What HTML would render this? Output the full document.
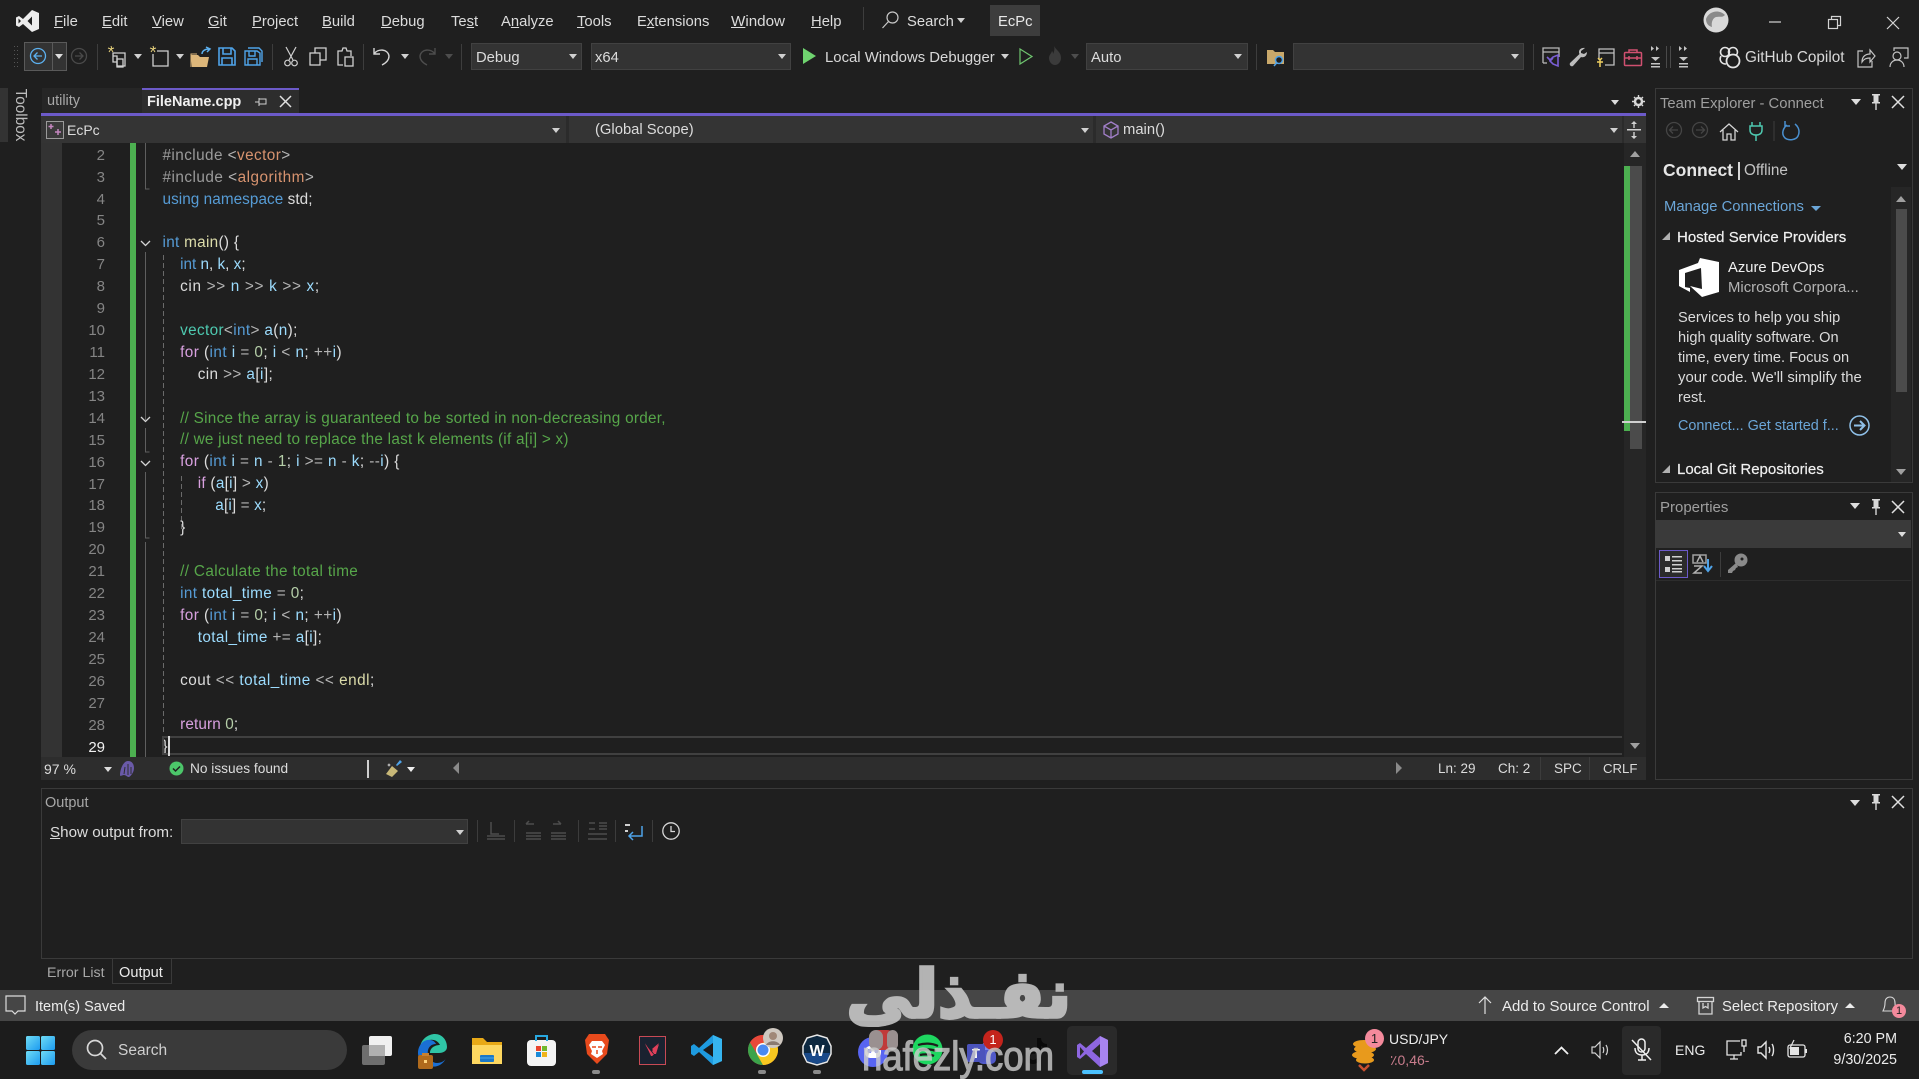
<!DOCTYPE html>
<html lang="en"><head><meta charset="utf-8"><title>EcPc - Visual Studio</title>
<style>
html,body{margin:0;padding:0;background:#1f1f1f;}
#r{position:relative;width:1919px;height:1079px;overflow:hidden;background:#1f1f1f;font-family:"Liberation Sans",sans-serif;font-size:15px;color:#dcdcdc;}
.t{position:absolute;white-space:pre;line-height:20px;margin-top:-9px;}
.b{position:absolute;}
svg{position:absolute;overflow:visible;}
.sep{position:absolute;width:1px;background:#3d3d3d;}
.tri{position:absolute;width:0;height:0;border-left:4px solid transparent;border-right:4px solid transparent;border-top:5px solid #d0d0d0;}
#code{position:absolute;left:162.5px;top:144.7px;font-size:15.3px;line-height:21.92px;color:#dcdcdc;}
#code div{height:21.92px;white-space:pre;}
.i1{padding-left:17.6px}.i2{padding-left:35.2px}.i3{padding-left:52.8px}
#nums{position:absolute;left:60px;width:45px;top:144.7px;text-align:right;font-size:15px;line-height:21.92px;color:#858585;}
.k{color:#569cd6}.c{color:#d8a0df}.v{color:#9cdcfe}.y{color:#4ec9b0}.f{color:#dcdcaa}.s{color:#d7936f}.g{color:#57a64a}.p{color:#9b9b9b}.n{color:#b5cea8}.o{color:#b4b4b4}
</style></head><body><div id="r">

<!-- VS logo -->
<svg style="left:15px;top:9px" width="25" height="24" viewBox="0 0 25 24"><path d="M17 1l7 3v16l-7 3-9-8-4 3-3-1.500V8.500L4 7l4 3zM17 7.500L12.500 12 17 16.500zM3.500 9.500v5L6 12z" fill="#ececec" fill-rule="evenodd"/></svg>

<!-- menu -->
<div style="font-size:14.8px;color:#dcdcdc">
<div class="t" style="left:54px;top:21px"><u>F</u>ile</div>
<div class="t" style="left:102px;top:21px"><u>E</u>dit</div>
<div class="t" style="left:152px;top:21px"><u>V</u>iew</div>
<div class="t" style="left:208px;top:21px"><u>G</u>it</div>
<div class="t" style="left:252px;top:21px"><u>P</u>roject</div>
<div class="t" style="left:322px;top:21px"><u>B</u>uild</div>
<div class="t" style="left:381px;top:21px"><u>D</u>ebug</div>
<div class="t" style="left:451px;top:21px">Te<u>s</u>t</div>
<div class="t" style="left:501px;top:21px">A<u>n</u>alyze</div>
<div class="t" style="left:577px;top:21px"><u>T</u>ools</div>
<div class="t" style="left:637px;top:21px">E<u>x</u>tensions</div>
<div class="t" style="left:731px;top:21px;font-size:15.2px"><u>W</u>indow</div>
<div class="t" style="left:811px;top:21px"><u>H</u>elp</div>
<div class="t" style="left:907px;top:21px">Search</div>
</div>
<div class="sep" style="left:863px;top:7px;height:23px"></div>
<svg style="left:881px;top:10px" width="20" height="20" fill="none" stroke="#c8c8c8" stroke-width="1.200"><circle cx="11.500" cy="7.500" r="5.500"/><path d="M7.500 11.500L1.500 18"/></svg>
<div class="tri" style="left:957px;top:18px"></div>
<div class="b" style="left:990px;top:5px;width:50px;height:31px;background:#3d3d3d"></div>
<div class="t" style="left:998px;top:21px;font-size:14.8px;color:#e8e8e8">EcPc</div>

<!-- top right -->
<svg style="left:1702px;top:7px" width="28" height="26"><ellipse cx="14" cy="13" rx="12.500" ry="12.500" fill="#d9d9d9"/><path d="M4 12c3-8 13-10 19-4-3 3-5 1-9 2-3 1-5 5-4 10-4-1-6-4-6-8z" fill="#8a8a8a"/></svg>
<svg style="left:1769px;top:15px" width="140" height="16" fill="none" stroke="#d4d4d4" stroke-width="1.200"><path d="M0 7h12"/><rect x="59.500" y="4.500" width="9" height="9"/><path d="M62.500 4.500V1.500h9v9h-3"/><path d="M118 2l12 12M130 2l-12 12"/></svg>

<!-- toolbar -->
<svg style="left:14px;top:46px" width="5" height="21"><g fill="#555"><rect x="0" y="0" width="1" height="1"/><rect x="3" y="0" width="1" height="1"/><rect x="0" y="4" width="1" height="1"/><rect x="3" y="4" width="1" height="1"/><rect x="0" y="8" width="1" height="1"/><rect x="3" y="8" width="1" height="1"/><rect x="0" y="12" width="1" height="1"/><rect x="3" y="12" width="1" height="1"/><rect x="0" y="16" width="1" height="1"/><rect x="3" y="16" width="1" height="1"/><rect x="0" y="20" width="1" height="1"/><rect x="3" y="20" width="1" height="1"/></g></svg>
<div class="b" style="left:24px;top:42px;width:41px;height:27px;background:#333;border:1px solid #5a5a5a"></div>
<div class="sep" style="left:52px;top:43px;height:27px;background:#5a5a5a"></div>
<svg style="left:29px;top:47px" width="18" height="18" fill="none" stroke="#5cb0ef" stroke-width="1.300"><circle cx="9" cy="9" r="7.500"/><path d="M13 9H5M8.500 5.500L5 9l3.500 3.500"/></svg>
<div class="tri" style="left:55px;top:54px;border-top-color:#ddd"></div>
<svg style="left:70px;top:47px" width="18" height="18" fill="none" stroke="#4a4a4a" stroke-width="1.300"><circle cx="9" cy="9" r="7.500"/><path d="M5 9h8M9.500 5.500L13 9l-3.500 3.500"/></svg>
<div class="sep" style="left:97px;top:44px;height:26px"></div>
<svg style="left:107px;top:45px" width="22" height="24"><path d="M4 1l1 3M1 3l3 1 3-1M4 4l-2 3M4 4l2 3" stroke="#e8d27c" stroke-width="1" fill="none"/><g fill="none" stroke="#d0d0d0" stroke-width="1.300"><path d="M6 8h12v13h-8V11H6zM6 8v9h4"/><rect x="10" y="14" width="6" height="8"/></g></svg>
<div class="tri" style="left:134px;top:54px"></div>
<svg style="left:149px;top:45px" width="22" height="24"><path d="M4 1l1 3M1 3l3 1 3-1M4 4l-2 3M4 4l2 3" stroke="#e8d27c" stroke-width="1" fill="none"/><path d="M8 6h11v15H4V9" fill="none" stroke="#d0d0d0" stroke-width="1.300"/></svg>
<div class="tri" style="left:176px;top:54px"></div>
<svg style="left:190px;top:46px" width="22" height="22"><path d="M1 9h7l2 2h9l-2 10H2z" fill="#dcb67a"/><path d="M1 21V8h6" fill="none" stroke="#dcb67a"/><path d="M12 8c0-3 3-5 7-5M16 1l4 2-3 3" fill="none" stroke="#5cb0ef" stroke-width="1.500"/></svg>
<svg style="left:218px;top:47px" width="18" height="19" fill="none" stroke="#4fa3e8" stroke-width="1.600"><path d="M1 1h13l3 3v14H1z"/><path d="M5 1v6h8V1M4 18v-7h10v7"/></svg>
<svg style="left:244px;top:47px" width="19" height="19" fill="none" stroke="#4fa3e8" stroke-width="1.400"><path d="M4 1h11l3 3v11"/><path d="M1 4h12l3 2v12H1z"/><path d="M5 4v5h6V4M4 18v-6h9v6"/></svg>
<div class="sep" style="left:272px;top:44px;height:26px"></div>
<svg style="left:284px;top:47px" width="14" height="20" fill="none" stroke="#d0d0d0" stroke-width="1.200"><path d="M2 0l7 13M12 0L5 13"/><circle cx="3.500" cy="16" r="2.800"/><circle cx="10.500" cy="16" r="2.800"/></svg>
<svg style="left:309px;top:47px" width="18" height="19" fill="none" stroke="#d0d0d0" stroke-width="1.300"><rect x="1" y="6" width="10" height="12"/><path d="M6 6V1h11v12h-6"/></svg>
<svg style="left:337px;top:46px" width="17" height="21" fill="none" stroke="#d0d0d0" stroke-width="1.300"><path d="M6 19H1V5h4l1-3h3l1 3h4v5"/><rect x="8" y="11" width="8" height="9"/></svg>
<div class="sep" style="left:363px;top:44px;height:26px"></div>
<svg style="left:373px;top:46px" width="18" height="20" fill="none" stroke="#d4d4d4" stroke-width="1.400"><path d="M7 8H1V2M1 8c4-6 14-5 15 2 0 4-3 7-7 9"/></svg>
<div class="tri" style="left:401px;top:54px"></div>
<svg style="left:418px;top:46px" width="18" height="20" fill="none" stroke="#4d4d4d" stroke-width="1.400"><path d="M11 8h6V2M17 8C13 2 3 3 2 10c0 4 3 7 7 9"/></svg>
<div class="tri" style="left:445px;top:54px;border-top-color:#4d4d4d"></div>
<div class="sep" style="left:461px;top:44px;height:26px"></div>

<div class="b" style="left:471px;top:43px;width:111px;height:27px;background:#333;box-shadow:inset 0 0 0 1px #414141"></div>
<div class="t" style="left:476px;top:57px;font-size:14.800px">Debug</div>
<div class="tri" style="left:569px;top:54px"></div>
<div class="b" style="left:591px;top:43px;width:200px;height:27px;background:#333;box-shadow:inset 0 0 0 1px #414141"></div>
<div class="t" style="left:595px;top:57px;font-size:14.800px">x64</div>
<div class="tri" style="left:778px;top:54px"></div>
<svg style="left:802px;top:47px" width="15" height="18"><path d="M1 1l13 8-13 8z" fill="#6fd46f"/></svg>
<div class="t" style="left:825px;top:56.500px;font-size:14.900px;color:#d8d8d8">Local Windows Debugger</div>
<div class="tri" style="left:1001px;top:54px"></div>
<svg style="left:1019px;top:48px" width="14" height="17" fill="none" stroke="#6fc56f" stroke-width="1.200"><path d="M1 1l12 7.500-12 7.500z"/></svg>
<svg style="left:1047px;top:46px" width="16" height="20"><path d="M7 0c2 4 7 6 7 12 0 4-3 7-6 7s-6-3-6-7c0-3 2-4 3-7 1 1 1 2 1 3 1-2 2-5 1-8z" fill="#3b3b3b"/></svg>
<div class="tri" style="left:1071px;top:54px;border-top-color:#4d4d4d"></div>
<div class="b" style="left:1086px;top:43px;width:162px;height:27px;background:#333;box-shadow:inset 0 0 0 1px #414141"></div>
<div class="t" style="left:1091px;top:57px;font-size:14.800px">Auto</div>
<div class="tri" style="left:1234px;top:54px"></div>
<div class="sep" style="left:1256px;top:44px;height:26px"></div>
<svg style="left:1266px;top:47px" width="20" height="20"><path d="M1 3h6l2 2h9v12H1z" fill="#c9a86a"/><circle cx="13" cy="13" r="3.500" fill="#1f1f1f" stroke="#4fa3e8" stroke-width="1.500"/><path d="M10.500 16L8 19" stroke="#4fa3e8" stroke-width="1.500"/></svg>
<div class="b" style="left:1293px;top:43px;width:231px;height:27px;background:#333;box-shadow:inset 0 0 0 1px #414141"></div>
<div class="tri" style="left:1511px;top:54px"></div>
<div class="sep" style="left:1533px;top:44px;height:26px"></div>
<svg style="left:1542px;top:47px" width="19" height="20" fill="none"><path d="M1 16V1h16v9M1 5h16" stroke="#b8b8b8" stroke-width="1.300"/><path d="M5 10l3 3 3-3 5-2v11l-5-2-3-3 3-3" stroke="#7b5fd6" stroke-width="1.600"/><path d="M1 16h4" stroke="#b8b8b8" stroke-width="1.300"/></svg>
<svg style="left:1569px;top:47px" width="19" height="20"><path d="M16 1c-3-.500-6 1-6 4 0 1 0 1 .500 2L1 16c-1 2 1 4 3 3l8-9c3 1 6-1 6-5l-3 2-3-1 0-2z" fill="#bcbcbc"/></svg>
<svg style="left:1596px;top:48px" width="19" height="20" fill="none"><path d="M3 12V1h15v16H9M3 5h15" stroke="#c0c0c0" stroke-width="1.300"/><path d="M4 11v8M7 14H1M2 10l2 2 2-2" stroke="#f0d060" stroke-width="1.500"/></svg>
<svg style="left:1624px;top:49px" width="18" height="17"><rect x=".500" y="3.500" width="17" height="13" rx="1" fill="none" stroke="#d05070" stroke-width="1.500"/><path d="M5 3V1h8v2M1 9h16M5 7v4M13 7v4" fill="none" stroke="#d05070" stroke-width="1.500"/></svg>
<svg style="left:1650px;top:46px" width="40" height="24"><g fill="#c4c4c4"><path d="M1 11h9l-4.500 4zM1 17h9v1.500H1zM1 20h9v1.500H1z"/><path d="M29 11h9l-4.500 4zM29 17h9v1.500h-9zM29 20h9v1.500h-9z"/><path d="M1 0l3 2.500-3 2.500zM6 0l3 2.500-3 2.500zM29 0l3 2.500-3 2.500zM34 0l3 2.500-3 2.500z"/></g><g fill="#4a4a4a"><rect x="16" y="0" width="1" height="22"/><rect x="20" y="0" width="1" height="22"/></g></svg>
<svg style="left:1719px;top:45px" width="22" height="24"><g fill="none" stroke="#e4e4e4" stroke-width="1.600"><circle cx="6" cy="7" r="4.500"/><circle cx="14" cy="7" r="4.500"/><path d="M2 11c-2 4 0 8 5 8"/></g><circle cx="14" cy="16" r="6.500" fill="#1f1f1f" stroke="#e4e4e4" stroke-width="1.800"/></svg>
<div class="t" style="left:1745px;top:57px;font-size:15.300px;color:#d8d8d8">GitHub Copilot</div>
<svg style="left:1857px;top:48px" width="19" height="20" fill="none" stroke="#c4c4c4" stroke-width="1.200"><path d="M6 3H1v16h14v-6"/><path d="M5 14c0-6 4-8 8-8V2l5 6-5 6v-4c-4 0-6 1-8 4z"/></svg>
<svg style="left:1889px;top:47px" width="20" height="21" fill="none" stroke="#c4c4c4" stroke-width="1.200"><path d="M5 4V1h14v10h-4"/><circle cx="8" cy="9" r="4"/><path d="M1 20c0-4 3-7 7-7s7 3 7 7"/></svg>

<!-- toolbox -->
<div class="b" style="left:0;top:88px;width:8px;height:54px;background:#333"></div>
<div class="t" style="left:20px;top:114px;font-size:15.300px;color:#bdbdbd;transform:translate(-50%,0) rotate(90deg);">Toolbox</div>

<!-- tabs -->
<div class="b" style="left:42px;top:88px;width:100px;height:25px;background:#262626"></div>
<div class="t" style="left:47px;top:100px;font-size:14.500px;color:#a8a8a8">utility</div>
<div class="b" style="left:142px;top:88px;width:157px;height:25px;background:#2d2d2d;border-top:2px solid #6c5ac9;box-sizing:border-box"></div>
<div class="t" style="left:147px;top:101px;font-size:14.500px;font-weight:bold;color:#f0f0f0">FileName.cpp</div>
<svg style="left:255px;top:96px" width="12" height="12" fill="none" stroke="#d0d0d0" stroke-width="1"><path d="M0 6h4M4 2v8M4 3h7v5H4M4 8h7" /></svg>
<svg style="left:280px;top:96px" width="11" height="11" fill="none" stroke="#e0e0e0" stroke-width="1.500"><path d="M0 0l11 11M11 0L0 11"/></svg>
<div class="tri" style="left:1611px;top:100px;border-top-color:#ddd"></div>
<svg style="left:1632px;top:95px" width="13" height="13"><circle cx="6.500" cy="6.500" r="3.500" fill="none" stroke="#d8d8d8" stroke-width="2.500"/><path d="M6.500 0v13M0 6.500h13M2 2l9 9M11 2l-9 9" stroke="#d8d8d8" stroke-width="1.400" stroke-dasharray="2 9"/></svg>
<div class="b" style="left:41px;top:113px;width:1605px;height:3px;background:#6c5ac9"></div>

<!-- nav bar -->
<div class="b" style="left:41px;top:116px;width:1605px;height:27px;background:#343434"></div>
<div class="sep" style="left:566px;top:116px;height:27px;width:3px;background:#2b2b2b"></div>
<div class="sep" style="left:1093px;top:116px;height:27px;width:3px;background:#2b2b2b"></div>
<div class="sep" style="left:1622px;top:116px;height:27px;width:2px;background:#2b2b2b"></div>
<svg style="left:46px;top:121px" width="18" height="18" fill="none"><rect x=".500" y=".500" width="17" height="17" stroke="#9a9a9a" fill="#3a3a3a"/><path d="M5 3v5M2.500 5.500h5" stroke="#c586c0" stroke-width="1.500"/><path d="M12 8v6M9 11h6" stroke="#c586c0" stroke-width="1.500"/></svg>
<div class="t" style="left:67px;top:129px;font-size:14px">EcPc</div>
<div class="tri" style="left:552px;top:128px"></div>
<div class="t" style="left:595px;top:129px;font-size:14.800px">(Global Scope)</div>
<div class="tri" style="left:1081px;top:128px"></div>
<svg style="left:1103px;top:121px" width="16" height="18" fill="none" stroke="#a27fc9" stroke-width="1.300"><path d="M8 1l7 4v8l-7 4-7-4V5zM1 5l7 4 7-4M8 9v8"/></svg>
<div class="t" style="left:1123px;top:129px;font-size:14.800px">main()</div>
<div class="tri" style="left:1610px;top:128px"></div>
<svg style="left:1627px;top:121px" width="14" height="18" fill="#d0d0d0"><path d="M0 8h14v1.500H0zM6.300 2h1.400v5H6.300zM6.300 11h1.400v5H6.300zM7 0l3 3H4zM7 18l-3-3h6z"/></svg>

<!-- editor -->
<div class="b" style="left:41px;top:143px;width:21px;height:614px;background:#333"></div>
<div class="b" style="left:130px;top:143px;width:6px;height:614px;background:#4caf50"></div>
<div id="nums"><div>2</div><div>3</div><div>4</div><div>5</div><div>6</div><div>7</div><div>8</div><div>9</div><div>10</div><div>11</div><div>12</div><div>13</div><div>14</div><div>15</div><div>16</div><div>17</div><div>18</div><div>19</div><div>20</div><div>21</div><div>22</div><div>23</div><div>24</div><div>25</div><div>26</div><div>27</div><div>28</div><div style="color:#f0f0f0">29</div></div>

<svg style="left:0;top:0" width="1919" height="1079" fill="none">
<path d="M145.500 143v46h4" stroke="#5f5f5f"/>
<path d="M145.500 252v168M145.500 428v24h4M145.500 472v66h4M145.500 542v215" stroke="#5f5f5f"/>
<path d="M141 241l4.500 4.500 4.500-4.500M141 417l4.500 4.500 4.500-4.500M141 461l4.500 4.500 4.500-4.500" stroke="#d4d4d4" stroke-width="1.300"/>
<path d="M163.500 255V735" stroke="#6a6a6a" stroke-dasharray="5 3"/>
<path d="M181.500 476V530" stroke="#6a6a6a" stroke-dasharray="5 3"/>
</svg>

<div id="code">
<div style="letter-spacing:.43px"><span class="p">#include</span> <span class="o">&lt;</span><span class="s">vector</span><span class="o">&gt;</span></div>
<div style="letter-spacing:.49px"><span class="p">#include</span> <span class="o">&lt;</span><span class="s">algorithm</span><span class="o">&gt;</span></div>
<div style="letter-spacing:.06px"><span class="k">using namespace</span> std;</div>
<div> </div>
<div style="letter-spacing:.3px"><span class="k">int</span> <span class="f">main</span>() {</div>
<div class="i1"><span class="k">int</span> <span class="v">n</span>, <span class="v">k</span>, <span class="v">x</span>;</div>
<div class="i1" style="letter-spacing:.68px">cin <span class="o">&gt;&gt;</span> <span class="v">n</span> <span class="o">&gt;&gt;</span> <span class="v">k</span> <span class="o">&gt;&gt;</span> <span class="v">x</span>;</div>
<div> </div>
<div class="i1" style="letter-spacing:.36px"><span class="y">vector</span><span class="o">&lt;</span><span class="k">int</span><span class="o">&gt;</span> <span class="v">a</span>(<span class="v">n</span>);</div>
<div class="i1" style="letter-spacing:.45px"><span class="c">for</span> (<span class="k">int</span> <span class="v">i</span> <span class="o">=</span> <span class="n">0</span>; <span class="v">i</span> <span class="o">&lt;</span> <span class="v">n</span>; <span class="o">++</span><span class="v">i</span>)</div>
<div class="i2" style="letter-spacing:.4px">cin <span class="o">&gt;&gt;</span> <span class="v">a</span>[<span class="v">i</span>];</div>
<div> </div>
<div class="i1" style="letter-spacing:.27px"><span class="g">// Since the array is guaranteed to be sorted in non-decreasing order,</span></div>
<div class="i1" style="letter-spacing:.25px"><span class="g">// we just need to replace the last k elements (if a[i] &gt; x)</span></div>
<div class="i1" style="letter-spacing:.42px"><span class="c">for</span> (<span class="k">int</span> <span class="v">i</span> <span class="o">=</span> <span class="v">n</span> <span class="o">-</span> <span class="n">1</span>; <span class="v">i</span> <span class="o">&gt;=</span> <span class="v">n</span> <span class="o">-</span> <span class="v">k</span>; <span class="o">--</span><span class="v">i</span>) {</div>
<div class="i2" style="letter-spacing:.28px"><span class="c">if</span> (<span class="v">a</span>[<span class="v">i</span>] <span class="o">&gt;</span> <span class="v">x</span>)</div>
<div class="i3" style="letter-spacing:.13px"><span class="v">a</span>[<span class="v">i</span>] <span class="o">=</span> <span class="v">x</span>;</div>
<div class="i1">}</div>
<div> </div>
<div class="i1" style="letter-spacing:.36px"><span class="g">// Calculate the total time</span></div>
<div class="i1" style="letter-spacing:.38px"><span class="k">int</span> <span class="v">total_time</span> <span class="o">=</span> <span class="n">0</span>;</div>
<div class="i1" style="letter-spacing:.45px"><span class="c">for</span> (<span class="k">int</span> <span class="v">i</span> <span class="o">=</span> <span class="n">0</span>; <span class="v">i</span> <span class="o">&lt;</span> <span class="v">n</span>; <span class="o">++</span><span class="v">i</span>)</div>
<div class="i2" style="letter-spacing:.38px"><span class="v">total_time</span> <span class="o">+=</span> <span class="v">a</span>[<span class="v">i</span>];</div>
<div> </div>
<div class="i1" style="letter-spacing:.5px">cout <span class="o">&lt;&lt;</span> <span class="v">total_time</span> <span class="o">&lt;&lt;</span> <span class="f">endl</span>;</div>
<div> </div>
<div class="i1" style="letter-spacing:.13px"><span class="c">return</span> <span class="n">0</span>;</div>
<div>}</div>
</div>
<div class="b" style="left:162px;top:736px;width:1460px;height:19px;border:2px solid #404040;border-right:0;box-sizing:border-box"></div>
<div class="b" style="left:168px;top:736px;width:1.500px;height:20px;background:#d8d8d8"></div>

<!-- editor scrollbar -->
<div class="b" style="left:1624px;top:143px;width:22px;height:614px;background:#262626"></div>
<div class="b" style="left:1624px;top:166px;width:6px;height:265px;background:#4caf50"></div>
<div class="b" style="left:1630px;top:166px;width:12px;height:283px;background:#4b4b4b"></div>
<div class="b" style="left:1622px;top:421px;width:24px;height:2px;background:#d0d0d0"></div>
<div class="b" style="left:1630px;top:151px;border-left:5px solid transparent;border-right:5px solid transparent;border-bottom:6px solid #a0a0a0"></div>
<div class="b" style="left:1630px;top:743px;border-left:5px solid transparent;border-right:5px solid transparent;border-top:6px solid #a0a0a0"></div>

<!-- editor status -->
<div class="b" style="left:41px;top:757px;width:1605px;height:23px;background:#2d2d2d"></div>
<div class="t" style="left:44px;top:768px;font-size:14px">97 %</div>
<div class="tri" style="left:104px;top:767px;border-top-color:#ddd"></div>
<svg style="left:120px;top:761px" width="14" height="16"><path d="M8 0c4 0 6 3 6 7s-3 8-5 9c-2 0-3-2-5-2s-4 2-4 0c0-5 3-14 8-14z" fill="#6a5aa8"/><path d="M8 3v11M5 6l-1 7M11 6l0 7" stroke="#2d2d2d"/></svg>
<svg style="left:169px;top:761px" width="15" height="15"><circle cx="7.500" cy="7.500" r="7" fill="#4cc66a"/><path d="M4 7.500l2.500 2.500 4.500-4.500" fill="none" stroke="#1f1f1f" stroke-width="1.500"/></svg>
<div class="t" style="left:190px;top:768px;font-size:13.700px">No issues found</div>
<div class="b" style="left:367px;top:760px;width:2px;height:18px;background:#d0d0d0"></div>
<svg style="left:385px;top:760px" width="17" height="17"><path d="M11 5l4-5 2 2-5 4z" fill="#4fa3e8"/><path d="M7 6l6 5-6 6-6-3z" fill="#c8b878"/><path d="M4 3l.500 1.500L6 5l-1.500.500L4 7l-.500-1.500L2 5l1.500-.500z" fill="#eee"/></svg>
<div class="tri" style="left:407px;top:767px;border-top-color:#eee"></div>
<div class="b" style="left:453px;top:762px;border-top:6px solid transparent;border-bottom:6px solid transparent;border-right:6px solid #8a8a8a"></div>
<div class="b" style="left:1396px;top:762px;border-top:6px solid transparent;border-bottom:6px solid transparent;border-left:6px solid #8a8a8a"></div>
<div class="t" style="left:1438px;top:768px;font-size:13.500px">Ln: 29</div>
<div class="t" style="left:1498px;top:768px;font-size:13.500px">Ch: 2</div>
<div class="b" style="left:1540px;top:757px;width:1px;height:23px;background:#3c3c3c"></div>
<div class="b" style="left:1589px;top:757px;width:1px;height:23px;background:#3c3c3c"></div>
<div class="t" style="left:1554px;top:768px;font-size:13.500px">SPC</div>
<div class="t" style="left:1603px;top:768px;font-size:13.200px">CRLF</div>

<!-- team explorer -->
<div class="b" style="left:1655px;top:88px;width:258px;height:395px;border:1px solid #3a3a3a;box-sizing:border-box"></div>
<div class="t" style="left:1660px;top:103px;font-size:14.800px;color:#9f9f9f">Team Explorer - Connect</div>
<div class="tri" style="left:1851px;top:99px;border-left-width:5px;border-right-width:5px;border-top-width:6px;border-top-color:#ddd"></div>
<svg style="left:1871px;top:94px" width="10" height="16" fill="#d8d8d8"><path d="M1 0h8v1.500H7.500V8H9v1.500H1V8h1.500V1.500H1zM4.300 9.500h1.400V16H4.300z"/></svg>
<svg style="left:1892px;top:96px" width="12" height="12" fill="none" stroke="#e0e0e0" stroke-width="1.500"><path d="M0 0l12 12M12 0L0 12"/></svg>
<svg style="left:1666px;top:121px" width="140" height="22" fill="none"><g stroke="#454545" stroke-width="1.300"><circle cx="8" cy="9" r="7.500"/><path d="M12 9H4M7 5.500L3.500 9 7 12.500"/><circle cx="34" cy="9" r="7.500"/><path d="M30 9h8M35 5.500L38.500 9 35 12.500"/></g><path d="M54 11l9-8 9 8M57 9v10h4v-6h4v6h4V9" stroke="#d4d4d4" stroke-width="1.300"/><path d="M86 1v4M94 1v4M84 5h12v4c0 3-2 5-6 5s-6-2-6-5zM90 14v6" stroke="#4ec9b0" stroke-width="1.500"/><path d="M108 0v20" stroke="#3c3c3c"/><path d="M121 4c-4 3-6 9-2 13 4 3 11 2 13-2 2-4 1-9-3-12M119 0v5h5" stroke="#4a90d0" stroke-width="1.500"/></svg>
<div class="t" style="left:1663px;top:169px;font-size:17.500px;font-weight:bold;color:#e6e6e6">Connect</div>
<div class="b" style="left:1738px;top:162px;width:1.500px;height:18px;background:#d8d8d8"></div>
<div class="t" style="left:1744px;top:170px;font-size:15.300px;color:#c4c4c4">Offline</div>
<div class="tri" style="left:1897px;top:164px;border-left-width:5px;border-right-width:5px;border-top-width:6px;border-top-color:#ddd"></div>
<div class="b" style="left:1891px;top:187px;width:20px;height:295px;background:#262626"></div>
<div class="b" style="left:1896px;top:209px;width:11px;height:183px;background:#4b4b4b"></div>
<div class="b" style="left:1896px;top:196px;border-left:5px solid transparent;border-right:5px solid transparent;border-bottom:6px solid #a0a0a0"></div>
<div class="b" style="left:1896px;top:469px;border-left:5px solid transparent;border-right:5px solid transparent;border-top:6px solid #a0a0a0"></div>
<div class="t" style="left:1664px;top:206px;font-size:14.800px;color:#6ba6d8">Manage Connections</div>
<div class="tri" style="left:1811px;top:206px;border-top-color:#6ba6d8;border-left-width:5px;border-right-width:5px;border-top-width:5px"></div>
<div class="b" style="left:1662px;top:232px;width:0;height:0;border-left:8px solid transparent;border-bottom:8px solid #b0b0b0"></div>
<div class="t" style="left:1677px;top:237px;font-size:15px;color:#f0f0f0;-webkit-text-stroke:.2px #f0f0f0">Hosted Service Providers</div>
<svg style="left:1678px;top:257px" width="42" height="41"><path d="M22 1l-2 5L1 13v16l6 3V16l16-5 1 21-12-3 12 11 17-5V5z" fill="#fff"/><path d="M12 31L1 29l0 0 11 6z" fill="#fff"/></svg>
<div class="t" style="left:1728px;top:267px;font-size:14.800px;color:#f0f0f0">Azure DevOps</div>
<div class="t" style="left:1728px;top:287px;font-size:14.900px;color:#b4b4b4">Microsoft Corpora...</div>
<div style="font-size:14.600px;color:#dcdcdc">
<div class="t" style="left:1678px;top:317px">Services to help you ship</div>
<div class="t" style="left:1678px;top:337px">high quality software. On</div>
<div class="t" style="left:1678px;top:357px">time, every time. Focus on</div>
<div class="t" style="left:1678px;top:377px;font-size:14.900px">your code. We'll simplify the</div>
<div class="t" style="left:1678px;top:397px">rest.</div>
</div>
<div class="t" style="left:1678px;top:425px;font-size:14.400px;color:#6ba6d8">Connect... Get started f...</div>
<svg style="left:1849px;top:415px" width="21" height="21" fill="none" stroke="#8fc0e8" stroke-width="1.500"><circle cx="10.500" cy="10.500" r="9.500"/><path d="M5 10.500h10M11 6l4.500 4.500L11 15" stroke-width="2"/></svg>
<div class="b" style="left:1662px;top:465px;width:0;height:0;border-left:8px solid transparent;border-bottom:8px solid #b0b0b0"></div>
<div class="t" style="left:1677px;top:469px;font-size:15px;color:#f0f0f0;-webkit-text-stroke:.2px #f0f0f0">Local Git Repositories</div>

<!-- properties -->
<div class="b" style="left:1655px;top:492px;width:258px;height:288px;border:1px solid #3a3a3a;box-sizing:border-box"></div>
<div class="t" style="left:1660px;top:507px;font-size:15px;color:#9f9f9f">Properties</div>
<div class="tri" style="left:1850px;top:503px;border-left-width:5px;border-right-width:5px;border-top-width:6px;border-top-color:#ddd"></div>
<svg style="left:1871px;top:499px" width="10" height="16" fill="#d8d8d8"><path d="M1 0h8v1.500H7.500V8H9v1.500H1V8h1.500V1.500H1zM4.300 9.500h1.400V16H4.300z"/></svg>
<svg style="left:1892px;top:501px" width="12" height="12" fill="none" stroke="#e0e0e0" stroke-width="1.500"><path d="M0 0l12 12M12 0L0 12"/></svg>
<div class="b" style="left:1656px;top:520px;width:255px;height:28px;background:#3a3a3a"></div>
<div class="tri" style="left:1898px;top:532px;border-top-color:#ddd"></div>
<div class="b" style="left:1659px;top:550px;width:29px;height:28px;background:#2b2b2b;border:1px solid #6c5ac9;box-sizing:border-box"></div>
<svg style="left:1665px;top:556px" width="18" height="17" fill="#d0d0d0"><rect x="0" y="0" width="5" height="5"/><rect x="0" y="11" width="5" height="5"/><path d="M7 0h10v1.500H7zM7 4h10v1.500H7zM7 8h10v1.500H7zM7 12h10v1.500H7zM7 15h10v1.500H7z"/></svg>
<svg style="left:1692px;top:554px" width="22" height="20" fill="none"><rect x="1" y="1" width="13" height="8" stroke="#a0a0a0" stroke-width="1.500"/><path d="M5 8l3-6 3 6M2 12h8l-8 7h8" stroke="#b0b0b0" stroke-width="1.500"/><path d="M16 5v11M12 12l4 5 4-5" stroke="#4fa3e8" stroke-width="2"/></svg>
<div class="sep" style="left:1720px;top:552px;height:25px"></div>
<svg style="left:1727px;top:553px" width="21" height="21"><circle cx="14" cy="7" r="6.500" fill="#8a8a8a"/><path d="M9 10L1 17v3h4l1-2 2-1 1-2 2-1z" fill="#8a8a8a"/><circle cx="15" cy="6" r="1.500" fill="#1f1f1f"/></svg>
<div class="b" style="left:1656px;top:580px;width:255px;height:1px;background:#2d2d2d"></div>

<!-- output pane -->
<div class="b" style="left:41px;top:788px;width:1872px;height:171px;border:1px solid #3a3a3a;box-sizing:border-box"></div>
<div class="t" style="left:45px;top:802px;font-size:14.500px;color:#a8a8a8">Output</div>
<div class="tri" style="left:1850px;top:800px;border-left-width:5px;border-right-width:5px;border-top-width:6px;border-top-color:#ddd"></div>
<svg style="left:1871px;top:794px" width="10" height="16" fill="#d8d8d8"><path d="M1 0h8v1.500H7.500V8H9v1.500H1V8h1.500V1.500H1zM4.300 9.500h1.400V16H4.300z"/></svg>
<svg style="left:1892px;top:796px" width="12" height="12" fill="none" stroke="#e0e0e0" stroke-width="1.500"><path d="M0 0l12 12M12 0L0 12"/></svg>
<div class="t" style="left:50px;top:832px;font-size:15.200px"><u>S</u>how output from:</div>
<div class="b" style="left:181px;top:819px;width:287px;height:25px;background:#333;box-shadow:inset 0 0 0 1px #414141"></div>
<div class="tri" style="left:456px;top:830px"></div>
<svg style="left:477px;top:818px" width="200" height="28" fill="none">
<g stroke="#3c3c3c"><path d="M.500 2v22M37.500 2v22M101.500 2v22M138.500 2v22M175.500 2v22"/></g>
<g stroke="#4d4d4d" stroke-width="1.500"><path d="M14 4v12h8M10 18h18M10 21h18"/><path d="M49 6h8M49 6l3-3M76 6h8M84 6l-3-3"/><path d="M49 15h15M49 18h15M49 21h15M74 15h15M74 18h15M74 21h15"/><path d="M112 5h6M112 11h6M122 5h8M122 8h8M122 11h8M111 16h19M111 21h19"/></g>
<path d="M148 7h5M148 13h3" stroke="#d0d0d0" stroke-width="2"/><path d="M165 8v10h-12M156 14l-4 4 4 4" stroke="#4fa3e8" stroke-width="1.500"/>
<circle cx="194" cy="13" r="8.200" stroke="#d8d8d8" stroke-width="1.300"/><path d="M194 8v5.500h4" stroke="#d8d8d8" stroke-width="1.300"/>
</svg>

<!-- bottom tabs -->
<div class="t" style="left:47px;top:971.500px;font-size:14.200px;color:#a8a8a8">Error List</div>
<div class="b" style="left:112px;top:959px;width:60px;height:25px;background:#1f1f1f;border:1px solid #3a3a3a;border-top:0;box-sizing:border-box"></div>
<div class="t" style="left:119px;top:971.500px;font-size:14.600px;color:#ececec">Output</div>

<!-- status bar -->
<div class="b" style="left:0;top:990px;width:1919px;height:31px;background:#464646"></div>
<svg style="left:5px;top:995px" width="21" height="21" fill="none" stroke="#dcdcdc" stroke-width="1.200"><path d="M1 1h19v15h-7l-3 3-3-3H1z"/></svg>
<div class="t" style="left:35px;top:1005.500px;font-size:14.500px;color:#ececec">Item(s) Saved</div>
<svg style="left:1478px;top:996px" width="14" height="18" fill="none" stroke="#e0e0e0" stroke-width="1.200"><path d="M7 18V1M1 7l6-6 6 6"/></svg>
<div class="t" style="left:1502px;top:1005.500px;font-size:15px;color:#ececec">Add to Source Control</div>
<div class="b" style="left:1659px;top:1003px;border-left:5px solid transparent;border-right:5px solid transparent;border-bottom:5px solid #ececec"></div>
<svg style="left:1697px;top:997px" width="17" height="18" fill="none" stroke="#d4d4d4" stroke-width="1.300"><rect x=".500" y=".500" width="16" height="4"/><path d="M2 5v12h13V5M6 6v5l2.500-1.500L11 11V6"/></svg>
<div class="t" style="left:1722px;top:1005.500px;font-size:14.800px;color:#ececec">Select Repository</div>
<div class="b" style="left:1845px;top:1003px;border-left:5px solid transparent;border-right:5px solid transparent;border-bottom:5px solid #ececec"></div>
<svg style="left:1882px;top:996px" width="16" height="18" fill="none" stroke="#d8d8d8" stroke-width="1.100"><path d="M8 1c-3 0-5 2-5 6 0 4-1 6-2 8h14c-1-2-2-4-2-8 0-4-2-6-5-6z"/></svg>
<div class="b" style="left:1892px;top:1004px;width:14px;height:14px;border-radius:50%;background:#f48a9c"></div>
<div class="t" style="left:1892px;top:1010px;width:14px;text-align:center;font-size:11px;color:#222">1</div>

<!-- taskbar -->
<div class="b" style="left:0;top:1021px;width:1919px;height:58px;background:#1c1c1c"></div>
<svg style="left:26px;top:1036px" width="29" height="29"><defs><linearGradient id="w" x1="0" y1="0" x2="1" y2="1"><stop offset="0" stop-color="#6fdcf5"/><stop offset="1" stop-color="#1c9bf0"/></linearGradient></defs><rect width="14" height="14" rx="1.500" fill="url(#w)"/><rect x="15" width="14" height="14" rx="1.500" fill="url(#w)"/><rect y="15" width="14" height="14" rx="1.500" fill="url(#w)"/><rect x="15" y="15" width="14" height="14" rx="1.500" fill="url(#w)"/></svg>
<div class="b" style="left:72px;top:1030px;width:275px;height:40px;border-radius:20px;background:#3a3a3a"></div>
<svg style="left:86px;top:1039px" width="22" height="22" fill="none" stroke="#d8d8d8" stroke-width="1.700"><circle cx="9" cy="9" r="7.500"/><path d="M14.500 14.500L20 20"/></svg>
<div class="t" style="left:118px;top:1050px;font-size:15.500px;color:#cfcfcf">Search</div>
<svg style="left:362px;top:1036px" width="30" height="29"><rect x="0" y="9" width="23" height="20" rx="2" fill="#6e6e6e"/><rect x="7" y="0" width="23" height="20" rx="2" fill="#f0f0f0"/><rect x="7" y="9" width="16" height="11" fill="#b0b0b0"/></svg>
<svg style="left:417px;top:1033px" width="30" height="36"><path d="M3 18C2 6 12 1 18 1c7 0 12 6 12 13 0 4-4 6-8 6H13c0-6 6-8 10-8-2-4-6-6-11-5C6 8 3 13 3 18z" fill="#2fc5a6"/><path d="M1 20c0-8 6-14 12-13 3 0 5 2 6 4-6 0-9 5-8 10 1 5 4 9 9 9 4 0 8-2 9-5-3 7-10 10-16 8C6 31 1 27 1 20z" fill="#1a6fd4"/><rect x="1" y="22" width="15" height="14" rx="2" fill="#b06a1c"/><rect x="5" y="20" width="7" height="3" fill="#c88030"/><rect x="7" y="27" width="3" height="3" fill="#ffd27a"/></svg>
<svg style="left:471px;top:1036px" width="32" height="28"><path d="M1 2h11l4 4h15v20H1z" fill="#e8a917"/><path d="M1 9h30v19H1z" fill="#fdd760"/><rect x="9" y="19" width="14" height="7" rx="1" fill="#1a78c8"/><path d="M9 22h14" stroke="#4aa8e8"/></svg>
<svg style="left:527px;top:1034px" width="29" height="32"><rect y="6" width="29" height="26" rx="4" fill="#f4f4f4"/><path d="M9 7V2h11v5" fill="none" stroke="#28a8e0" stroke-width="2"/><rect x="9" y="12" width="5" height="5" fill="#e8432d"/><rect x="15" y="12" width="5" height="5" fill="#6fb82d"/><rect x="9" y="18" width="5" height="5" fill="#1a8ad8"/><rect x="15" y="18" width="5" height="5" fill="#f0b41a"/></svg>
<svg style="left:584px;top:1033px" width="26" height="32"><path d="M5 1h16l4 6-2 14-10 10L3 21 1 7z" fill="#e84a1c"/><path d="M13 8l5 0 3 4-3 6 1 3-6 4-6-4 1-3-3-6 3-4z" fill="#fff"/><path d="M8 14h4M14 14h4M13 17v4" stroke="#e84a1c" stroke-width="1.500"/></svg>
<div class="b" style="left:592px;top:1070px;width:8px;height:4px;border-radius:2px;background:#8a8a8a"></div>
<div class="b" style="left:639px;top:1036px;width:25px;height:27px;background:#1a2230;border:1px solid #c84a55"></div>
<svg style="left:645px;top:1043px" width="14" height="13"><path d="M0 0l6 13h2L0 0M14 0L9 8l-2-2z" fill="#e0405a"/><path d="M0 1l6 11h3L0 1zM14 1l-7 7 2 3h2z" fill="#e0405a"/></svg>
<svg style="left:691px;top:1034px" width="32" height="32"><path d="M22 1l9 4v22l-9 4-14-13-5 4-3-2V12l3-2 5 4z" fill="#1e9be0"/><path d="M22 9v14L12 16z" fill="#1c1c1c"/><path d="M22 1l9 4v22l-9 4z" fill="#36b5f0"/><path d="M22 9v14l-6-7z" fill="#1c1c1c"/></svg>
<svg style="left:747px;top:1034px" width="32" height="32"><circle cx="16" cy="16" r="15" fill="#e8483a"/><path d="M16 31A15 15 0 0 1 3 8.500L10 20z" fill="#3ba34a"/><path d="M16 31a15 15 0 0 0 13-22.500H16l-6 12z" fill="#f8c820"/><path d="M3 8.500A15 15 0 0 1 29 8.500H16z" fill="#e8483a"/><circle cx="16" cy="16" r="7" fill="#fff"/><circle cx="16" cy="16" r="5.500" fill="#4a8af0"/></svg>
<svg style="left:763px;top:1028px" width="20" height="20"><circle cx="10" cy="10" r="10" fill="#cfc8c0"/><circle cx="10" cy="8" r="4" fill="#a08878"/><path d="M3 17c2-5 12-5 14 0z" fill="#8a7a70"/></svg>
<div class="b" style="left:758px;top:1070px;width:8px;height:4px;border-radius:2px;background:#8a8a8a"></div>
<svg style="left:802px;top:1034px" width="30" height="32"><path d="M15 1l10 3 4 8v8l-4 8-10 3-10-3-4-8v-8l4-8z" fill="#0d2840" stroke="#e8e8e8" stroke-width="1.500"/><path d="M2 19h26l-3 8-10 3-10-3z" fill="#1a4a8a"/><text x="15" y="22" text-anchor="middle" font-family="Liberation Sans" font-weight="bold" font-size="16" fill="#fff">W</text></svg>
<div class="b" style="left:813px;top:1070px;width:8px;height:4px;border-radius:2px;background:#8a8a8a"></div>
<svg style="left:857px;top:1034px" width="36" height="36"><circle cx="16" cy="18" r="15" fill="#5865f2"/><rect x="8" y="12" width="16" height="12" rx="5" fill="#fff"/><circle cx="12.500" cy="17" r="2" fill="#5865f2"/><circle cx="19.500" cy="17" r="2" fill="#5865f2"/></svg>
<div class="b" style="left:869px;top:1030px;width:28px;height:20px;border-radius:10px;background:#c03a3a"></div>
<div class="b" style="left:869px;top:1030px;width:14px;height:20px;border-radius:10px;background:#9a9090"></div>
<div class="b" style="left:887px;top:1030px;width:11px;height:20px;border-radius:10px;background:#9a9090"></div>
<svg style="left:912px;top:1034px" width="31" height="31"><circle cx="15.500" cy="15.500" r="15" fill="#1ed760"/><path d="M6 11c6-2 14-2 20 1M7 16c5-1 12-1 17 1M8 21c4-1 10-1 14 1" fill="none" stroke="#1c1c1c" stroke-width="2.200"/></svg>
<svg style="left:966px;top:1036px" width="30" height="30"><circle cx="22" cy="11" r="6" fill="#7b83eb"/><rect x="12" y="14" width="18" height="14" rx="5" fill="#5059c9"/><rect x="1" y="8" width="18" height="18" rx="2" fill="#4b53bc"/><text x="10" y="22" text-anchor="middle" font-family="Liberation Sans" font-weight="bold" font-size="13" fill="#fff">T</text></svg>
<div class="b" style="left:983px;top:1030px;width:20px;height:20px;border-radius:50%;background:#c4241c"></div>
<div class="t" style="left:983px;top:1039px;width:20px;text-align:center;font-size:13px;color:#fff">1</div>
<svg style="left:1025px;top:1037px" width="24" height="28"><path d="M12 1h4c0 4 3 6 6 6v4c-2 0-4-1-6-2v10c0 5-4 8-8 8s-7-3-7-7 4-8 9-7v4c-3-1-5 1-5 3s2 3 3 3c2 0 4-1 4-4z" fill="#0a0a0a"/></svg>
<div class="b" style="left:1067px;top:1026px;width:50px;height:49px;border-radius:5px;background:#2a2a2a"></div>
<svg style="left:1076px;top:1035px" width="33" height="33"><path d="M24 1l8 4v23l-8 4-14-13-6 5-3-2V10l3-2 6 5z" fill="#8e66e0"/><path d="M24 9v14l-8-7z" fill="#2a2a2a"/><path d="M24 1l8 4v23l-8 4z" fill="#a884f0"/><path d="M4 12v9l4-4.500z" fill="#2a2a2a"/></svg>
<div class="b" style="left:1082px;top:1070px;width:21px;height:4px;border-radius:2px;background:#4cc2ff"></div>

<!-- tray -->
<svg style="left:1350px;top:1035px" width="30" height="36"><g fill="#e89a1c"><ellipse cx="14" cy="9" rx="11" ry="4"/><ellipse cx="15" cy="14" rx="11" ry="4"/><ellipse cx="13" cy="20" rx="11" ry="4"/><ellipse cx="15" cy="25" rx="9" ry="3.500"/></g><path d="M9 30l5 5 5-5" fill="none" stroke="#c85030" stroke-width="2.500"/></svg>
<div class="b" style="left:1365px;top:1029px;width:19px;height:19px;border-radius:50%;background:#f48a9c"></div>
<div class="t" style="left:1365px;top:1037.500px;width:19px;text-align:center;font-size:13px;color:#222">1</div>
<div class="t" style="left:1389px;top:1038px;font-size:14px;color:#ececec">USD/JPY</div>
<div class="t" style="left:1390px;top:1059px;font-size:14px;color:#c87c8c">٪0,46-</div>
<svg style="left:1554px;top:1046px" width="15" height="9" fill="none" stroke="#f0f0f0" stroke-width="1.800"><path d="M1 8l6.500-6.500L14 8"/></svg>
<svg style="left:1591px;top:1040px" width="21" height="20" fill="none" stroke="#d4d4d4" stroke-width="1.200"><path d="M1 7v6h3l5 5V2L4 7zM12 7c1 2 1 4 0 6M15 5c2 3 2 7 0 10"/></svg>
<div class="b" style="left:1622px;top:1026px;width:39px;height:49px;background:#2a2a2a;border-radius:4px"></div>
<svg style="left:1631px;top:1038px" width="22" height="24" fill="none" stroke="#f0f0f0" stroke-width="1.500"><rect x="7" y="1" width="7" height="13" rx="3.500"/><path d="M4 10c0 5 3 7 7 7s7-2 7-7M11 17v5M7 22h8M1 2l19 20"/></svg>
<div class="t" style="left:1675px;top:1049px;font-size:14px;color:#ececec">ENG</div>
<svg style="left:1726px;top:1039px" width="22" height="22" fill="none" stroke="#e4e4e4" stroke-width="1.300"><path d="M14 2H1v14h14v-3M4 20h8M8 16v4"/><rect x="16" y="1" width="4" height="6"/><path d="M18 7v6"/></svg>
<svg style="left:1757px;top:1040px" width="21" height="20" fill="none" stroke="#e4e4e4" stroke-width="1.400"><path d="M1 7v6h3l5 5V2L4 7zM12 7c1 2 1 4 0 6M15 4c2 3 2 9 0 12"/></svg>
<svg style="left:1787px;top:1040px" width="21" height="19"><rect x="1" y="5" width="17" height="12" rx="2" fill="none" stroke="#e4e4e4" stroke-width="1.300"/><rect x="3" y="7" width="9" height="8" fill="#e4e4e4"/><rect x="18" y="9" width="2" height="4" fill="#e4e4e4"/><path d="M7 0L3 8h4l-2 6" fill="none" stroke="#e4e4e4" stroke-width="1.200"/></svg>
<div class="t" style="left:1797px;top:1038px;width:100px;text-align:right;font-size:14.300px;color:#ececec">6:20 PM</div>
<div class="t" style="left:1797px;top:1059px;width:100px;text-align:right;font-size:14.300px;color:#ececec">9/30/2025</div>

<!-- watermark -->
<div class="t" dir="rtl" style="left:851px;top:995px;width:220px;line-height:100px;margin-top:-50px;text-align:center;font-family:'DejaVu Sans',sans-serif;font-weight:bold;font-size:66px;color:#cdcdcd;opacity:.85;-webkit-text-stroke:3.500px #cdcdcd">نفـذلى</div>
<div class="t" style="left:862px;top:1056px;line-height:40px;margin-top:-20px;font-size:41px;color:#cdcdcd;opacity:.8;-webkit-text-stroke:1.200px #cdcdcd;transform:scaleX(.89);transform-origin:0 50%">nafezly.com</div>

</div></body></html>
